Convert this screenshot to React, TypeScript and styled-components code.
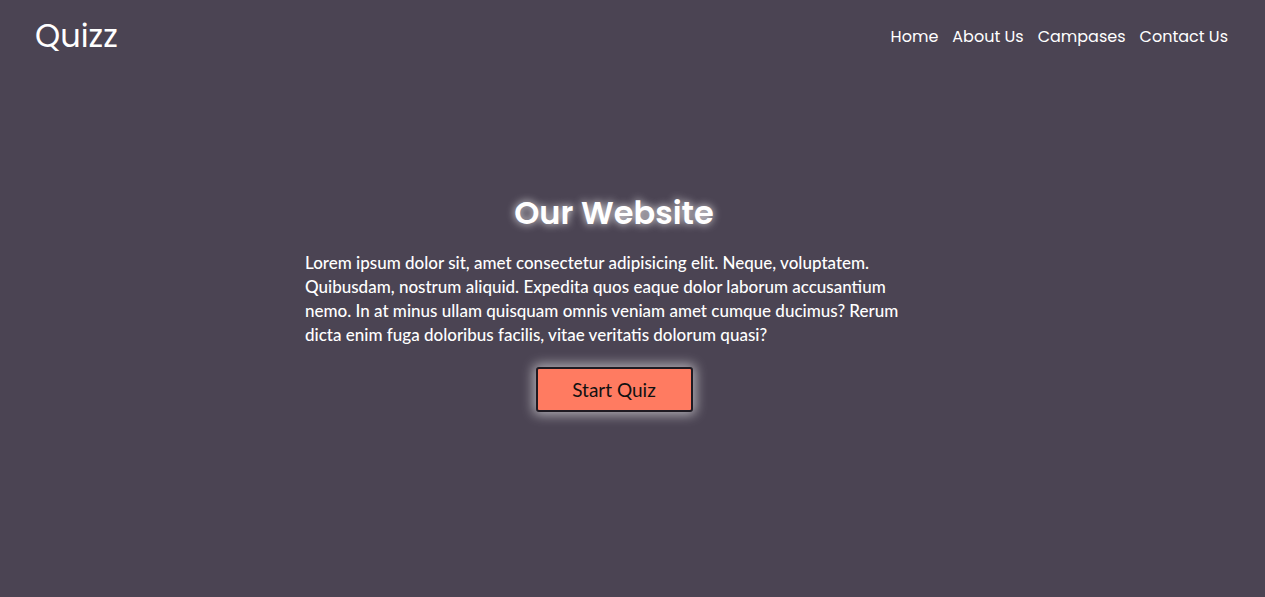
import * as React from "react";
import styled, { createGlobalStyle } from "styled-components";

const GlobalStyle = createGlobalStyle`
  html, body {
    margin: 0;
    padding: 0;
    background: #4b4453;
  }
  body {
    font-family: "Lato", "Open Sans", sans-serif;
    color: #fff;
  }
`;

const Page = styled.div`
  min-height: 597px;
  background: #4b4453;
  display: flex;
  flex-direction: column;
`;

const Header = styled.header`
  display: flex;
  align-items: center;
  justify-content: space-between;
  padding: 14px 37px 0 35px;
  height: 44px;
`;

const Logo = styled.a`
  font-family: "Poppins", "Open Sans", sans-serif;
  font-size: 32px;
  font-weight: 400;
  color: #fff;
  text-decoration: none;
`;

const Nav = styled.nav`
  display: flex;
  gap: 14px;
`;

const NavLink = styled.a`
  font-family: "Poppins", "Open Sans", sans-serif;
  font-size: 16px;
  color: #fff;
  text-decoration: none;
`;

const Main = styled.main`
  display: flex;
  justify-content: center;
  padding: 131px 37px 0 0;
`;

const Content = styled.section`
  width: 618px;
  display: flex;
  flex-direction: column;
  align-items: center;
`;

const Title = styled.h1`
  margin: 0 0 14px;
  font-family: "Poppins", "Open Sans", sans-serif;
  font-size: 32px;
  font-weight: 600;
  color: #fff;
  text-shadow: 0 0 8px rgba(255, 255, 255, 0.9);
`;

const Text = styled.p`
  margin: 0;
  align-self: stretch;
  font-size: 17px;
  line-height: 24px;
  font-weight: 500;
`;

const StartButton = styled.button`
  margin-top: 20px;
  width: 157px;
  height: 45px;
  background: #ff7b61;
  border: 2px solid #1e1a22;
  border-radius: 3px;
  font-family: "Lato", "Open Sans", sans-serif;
  font-size: 19px;
  color: #111;
  cursor: pointer;
  box-shadow: 0 0 12px 3px rgba(255, 255, 255, 0.55);
`;

export default function App() {
  return (
    <Page>
      <GlobalStyle />
      <Header>
        <Logo href="#">Quizz</Logo>
        <Nav>
          <NavLink href="#">Home</NavLink>
          <NavLink href="#">About Us</NavLink>
          <NavLink href="#">Campases</NavLink>
          <NavLink href="#">Contact Us</NavLink>
        </Nav>
      </Header>
      <Main>
        <Content>
          <Title>Our Website</Title>
          <Text>
            Lorem ipsum dolor sit, amet consectetur adipisicing elit. Neque,
            voluptatem. Quibusdam, nostrum aliquid. Expedita quos eaque dolor
            laborum accusantium nemo. In at minus ullam quisquam omnis veniam
            amet cumque ducimus? Rerum dicta enim fuga doloribus facilis, vitae
            veritatis dolorum quasi?
          </Text>
          <StartButton>Start Quiz</StartButton>
        </Content>
      </Main>
    </Page>
  );
}
